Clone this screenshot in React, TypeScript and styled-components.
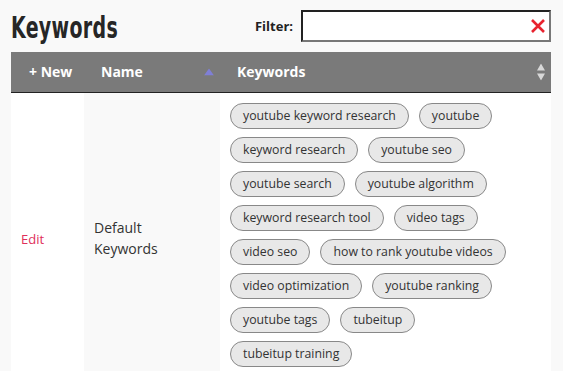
import styled, { createGlobalStyle } from 'styled-components';

const GlobalStyle = createGlobalStyle`
    body {
        margin: 0;
        background: #f9f9f9;
        font-family: 'Open Sans', 'Noto Sans', sans-serif;
        color: #333;
    }
`;

const Page = styled.div`
    width: 540px;
    padding: 0 0 0 11px;
`;

const TopBar = styled.div`
    display: flex;
    align-items: center;
    justify-content: space-between;
    height: 52px;
`;

const Title = styled.h1`
    margin: 0;
    font-family: 'DejaVu Sans Condensed', 'DejaVu Sans', sans-serif;
    font-size: 31px;
    font-weight: 700;
    color: #262626;
    letter-spacing: 0.5px;
    transform: scaleX(0.68);
    transform-origin: left center;
    padding-top: 2px;
`;

const FilterGroup = styled.label`
    display: flex;
    align-items: center;
    gap: 8px;
    font-size: 13px;
    font-weight: 700;
    color: #222;
`;

const FilterBox = styled.div`
    position: relative;
    width: 246px;
    height: 28px;
    background: #fff;
    border-style: solid;
    border-width: 2px;
    border-color: #222 #777 #777 #222;
`;

const FilterInput = styled.input`
    width: 100%;
    height: 100%;
    box-sizing: border-box;
    border: none;
    outline: none;
    background: transparent;
    padding: 0 30px 0 6px;
    font: inherit;
`;

const ClearButton = styled.button`
    position: absolute;
    right: 3px;
    top: 6px;
    width: 16px;
    height: 16px;
    padding: 0;
    border: none;
    background: none;
    cursor: pointer;
`;

const Table = styled.table`
    width: 540px;
    border-collapse: collapse;
    table-layout: fixed;
`;

const HeadCell = styled.th<{ $width: number }>`
    position: relative;
    width: ${p => p.$width}px;
    height: 40px;
    padding: 0 0 0 ${p => (p.$width === 73 ? 18 : 17)}px;
    box-sizing: border-box;
    background: #7a7a7a;
    border-bottom: 1px solid #222;
    color: #fff;
    font-size: 14px;
    font-weight: 700;
    text-align: left;
`;

const SortMark = styled.svg`
    position: absolute;
    top: 50%;
    transform: translateY(-50%);
`;

const Cell = styled.td<{ $shade?: boolean }>`
    vertical-align: middle;
    background: ${p => (p.$shade ? '#f9f9f9' : '#fff')};
    padding: 0 10px;
`;

const EditLink = styled.a`
    color: #e0305a;
    font-size: 13px;
    text-decoration: none;
    cursor: pointer;
`;

const NameText = styled.div`
    font-size: 14px;
    line-height: 21px;
    color: #333;
`;

const TagList = styled.div`
    display: flex;
    flex-wrap: wrap;
    gap: 8px 10px;
    padding: 10px 0 16px;
`;

const Tag = styled.span`
    display: inline-flex;
    align-items: center;
    height: 26px;
    box-sizing: border-box;
    padding: 0 12px;
    border: 1px solid #888;
    border-radius: 13px;
    background: #e8e8e8;
    color: #333;
    font-size: 12.3px;
    white-space: nowrap;
`;

const keywords = [
    'youtube keyword research',
    'youtube',
    'keyword research',
    'youtube seo',
    'youtube search',
    'youtube algorithm',
    'keyword research tool',
    'video tags',
    'video seo',
    'how to rank youtube videos',
    'video optimization',
    'youtube ranking',
    'youtube tags',
    'tubeitup',
    'tubeitup training',
];

export default function App() {
    return (
        <Page>
            <GlobalStyle />
            <TopBar>
                <Title>Keywords</Title>
                <FilterGroup>
                    Filter:
                    <FilterBox>
                        <FilterInput type="text" />
                        <ClearButton aria-label="Clear filter">
                            <svg width="16" height="16" viewBox="0 0 16 16">
                                <path d="M2 2 L14 14 M14 2 L2 14" stroke="#e8232f" strokeWidth="2.6" />
                            </svg>
                        </ClearButton>
                    </FilterBox>
                </FilterGroup>
            </TopBar>

            <Table>
                <thead>
                    <tr>
                        <HeadCell $width={73}>+ New</HeadCell>
                        <HeadCell $width={136}>
                            Name
                            <SortMark width="10" height="7" viewBox="0 0 10 7" style={{ right: 6 }}>
                                <path d="M5 0 L10 7 L0 7 Z" fill="#7f7fd6" />
                            </SortMark>
                        </HeadCell>
                        <HeadCell $width={331}>
                            Keywords
                            <SortMark width="8" height="17" viewBox="0 0 8 17" style={{ right: 6 }}>
                                <path d="M4 0 L8 7 L0 7 Z M4 17 L8 10 L0 10 Z" fill="#d8d8d8" />
                            </SortMark>
                        </HeadCell>
                    </tr>
                </thead>
                <tbody>
                    <tr>
                        <Cell>
                            <EditLink>Edit</EditLink>
                        </Cell>
                        <Cell $shade>
                            <NameText>
                                Default
                                <br />
                                Keywords
                            </NameText>
                        </Cell>
                        <Cell>
                            <TagList>
                                {keywords.map(k => (
                                    <Tag key={k}>{k}</Tag>
                                ))}
                            </TagList>
                        </Cell>
                    </tr>
                </tbody>
            </Table>
        </Page>
    );
}
